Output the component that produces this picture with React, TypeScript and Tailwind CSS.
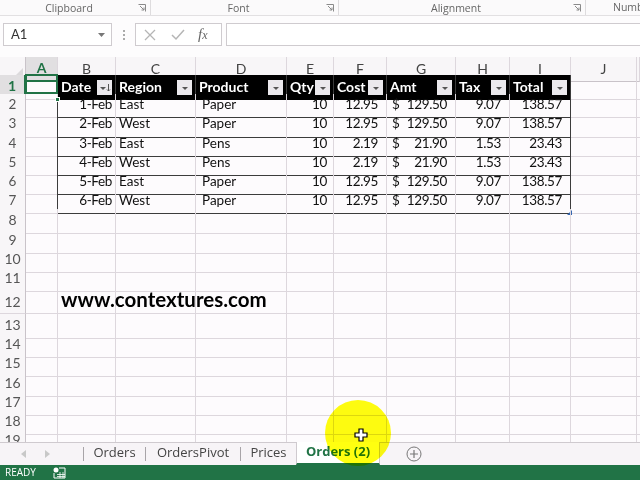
import React from 'react';

const COLS = 'grid grid-cols-[26px_32px_58px_80px_91px_47px_53px_69px_54px_61px_66px_1fr]';
const G = 'border-[#ddd7dd]';
const DARK = 'border-[#3c3c3c]';
const NUM = 'tracking-[-0.35px]';

type Row = [string, string, string, string, string, string, string, string];

const data: Row[] = [
  ['1-Feb', 'East', 'Paper', '10', '12.95', '129.50', '9.07', '138.57'],
  ['2-Feb', 'West', 'Paper', '10', '12.95', '129.50', '9.07', '138.57'],
  ['3-Feb', 'East', 'Pens', '10', '2.19', '21.90', '1.53', '23.43'],
  ['4-Feb', 'West', 'Pens', '10', '2.19', '21.90', '1.53', '23.43'],
  ['5-Feb', 'East', 'Paper', '10', '12.95', '129.50', '9.07', '138.57'],
  ['6-Feb', 'West', 'Paper', '10', '12.95', '129.50', '9.07', '138.57'],
];

function Launcher() {
  return (
    <svg width="8" height="8" viewBox="0 0 8 8" className="shrink-0">
      <path d="M0.5 0.5H7.5V7.5" fill="none" stroke="#8a8a8a" strokeWidth="1" />
      <path d="M2 2L6 6M6 3.5V6H3.5" fill="none" stroke="#8a8a8a" strokeWidth="1" />
    </svg>
  );
}

function FilterBtn({ sort }: { sort?: boolean }) {
  return (
    <div className="mr-[3px] flex h-[15px] w-[15px] items-center justify-center bg-[#ebe9ed]">
      <svg width="13" height="10" viewBox="0 0 13 10">
        <path d={sort ? 'M2 4H8L5 7Z' : 'M4 4H10L7 7Z'} fill="#555" />
        {sort && <path d="M10.5 1V8M9 6.5L10.5 8L12 6.5" fill="none" stroke="#555" strokeWidth="1" />}
      </svg>
    </div>
  );
}

function RowHead({ n, active, tall }: { n: number; active?: boolean; tall?: boolean }) {
  return (
    <div
      className={`flex items-center justify-center border-b border-r ${G} ${
        active
          ? 'border-r-2 border-r-[#217346] bg-[#e1dfe1] font-bold text-[#217346]'
          : 'border-r-[#c9c3c9] bg-[#f8f6f8] text-[#555]'
      } ${tall ? 'pt-[4px]' : 'pb-[3px]'}`}
    >
      {n}
    </div>
  );
}

export default function App() {
  const letters = ['A', 'B', 'C', 'D', 'E', 'F', 'G', 'H', 'I', 'J', ''];
  const heads = ['Date', 'Region', 'Product', 'Qty', 'Cost', 'Amt', 'Tax', 'Total'];
  const cell = 'flex items-center pb-[3px]';

  return (
    <div className="relative flex h-[480px] w-[640px] flex-col overflow-hidden bg-[#fdfbfd] font-[Lato,sans-serif] text-[14px] text-[#111]">
      {/* ribbon group labels */}
      <div className="flex h-[16px] border-b border-[#e2e0e2] bg-[#fbfafb] font-['Open_Sans',sans-serif] text-[10.5px] leading-[14px] text-[#666]">
        <div className="flex w-[151px] shrink-0 items-center border-r border-[#dedcde] pr-[4px]">
          <span className="flex-1 text-center">Clipboard</span>
          <Launcher />
        </div>
        <div className="flex w-[188px] shrink-0 items-center border-r border-[#dedcde] pr-[4px]">
          <span className="flex-1 text-center">Font</span>
          <Launcher />
        </div>
        <div className="flex w-[247px] shrink-0 items-center border-r border-[#dedcde] pr-[4px]">
          <span className="flex-1 text-center">Alignment</span>
          <Launcher />
        </div>
        <div className="shrink-0 whitespace-nowrap pl-[27px] leading-[14px]">Number</div>
      </div>

      {/* formula bar */}
      <div className="flex h-[41px] items-start bg-[#fdfcfd] pt-[7px]">
        <div className="ml-[3px] flex h-[23px] w-[109px] items-center justify-between border border-[#cfcbcf] bg-white pl-[7px] pr-[6px] text-[13px] text-[#333]">
          <span>A1</span>
          <svg width="7" height="4" viewBox="0 0 7 4">
            <path d="M0 0H7L3.5 4Z" fill="#777" />
          </svg>
        </div>
        <div className="ml-[10px] flex h-[23px] w-[4px] flex-col items-center justify-center gap-[2px]">
          <div className="h-[2px] w-[2px] bg-[#aaa]" />
          <div className="h-[2px] w-[2px] bg-[#aaa]" />
          <div className="h-[2px] w-[2px] bg-[#aaa]" />
        </div>
        <div className="ml-[9px] flex h-[23px] w-[87px] items-center border border-[#cfcbcf] bg-white">
          <svg width="12" height="12" viewBox="0 0 12 12" className="ml-[8px]">
            <path d="M1 1L11 11M11 1L1 11" stroke="#b5b5b5" strokeWidth="1.3" />
          </svg>
          <svg width="14" height="12" viewBox="0 0 14 12" className="ml-[15px]">
            <path d="M1 6L5 10L13 1" fill="none" stroke="#b5b5b5" strokeWidth="1.5" />
          </svg>
          <span className="ml-[13px] font-['Liberation_Serif',serif] text-[15px] italic text-[#666]">
            f<span className="text-[12px]">x</span>
          </span>
        </div>
        <div className="ml-[4px] h-[23px] flex-1 border border-r-0 border-[#cfcbcf] bg-white" />
      </div>

      {/* grid */}
      <div className="h-[385px] overflow-hidden">
        {/* column header */}
        <div className={`${COLS} h-[18px] text-[#444]`}>
          <div className="flex items-end justify-end border-b border-r border-[#c9c3c9] bg-[#f8f6f8] pb-[2px] pr-[2px]">
            <svg width="11" height="11" viewBox="0 0 11 11">
              <path d="M11 0V11H0Z" fill="#dcdadc" />
            </svg>
          </div>
          {letters.map((l, i) => (
            <div
              key={i}
              className={`flex items-center justify-center border-r pb-[2px] ${G} ${
                i === 0
                  ? 'border-b-2 border-b-[#217346] bg-[#e1dfe1] font-bold text-[#217346]'
                  : 'border-b border-b-[#c9c3c9] bg-[#f8f6f8]'
              }`}
            >
              {l}
            </div>
          ))}
        </div>

        {/* row 1: table header */}
        <div className={`${COLS} h-[19.2px]`}>
          <RowHead n={1} active />
          <div className={`relative border-b border-r ${G} ${DARK} border-b-[#ddd7dd]`}>
            <div className="absolute -left-[1px] -top-[1px] h-[20px] w-[33px] border-2 border-[#217346]" />
            <div className="absolute -bottom-[3px] -right-[3px] h-[5px] w-[5px] border border-white bg-[#217346]" />
          </div>
          {heads.map((h, i) => (
            <div key={h} className="flex items-center justify-between border-r border-[#3a3a3a] bg-black pl-[3px] font-bold text-white">
              <span className="pb-[3px]">{h}</span>
              <FilterBtn sort={i === 0} />
            </div>
          ))}
          <div className={`border-b border-r ${G}`} />
          <div className={`border-b ${G}`} />
        </div>

        {/* rows 2-7 */}
        {data.map((r, i) => (
          <div key={i} className={`${COLS} h-[19.2px] text-[13.5px]`}>
            <RowHead n={i + 2} />
            <div className={`border-b border-r-[1.5px] border-b-[#ddd7dd] ${DARK}`} />
            <div className={`${cell} ${NUM} justify-end border-b-[1.5px] border-r ${DARK} border-r-[#ddd7dd] pr-[3px]`}>{r[0]}</div>
            <div className={`${cell} border-b-[1.5px] border-r ${DARK} border-r-[#ddd7dd] pl-[3px]`}>{r[1]}</div>
            <div className={`${cell} border-b-[1.5px] border-r ${DARK} border-r-[#ddd7dd] pl-[6px]`}>{r[2]}</div>
            <div className={`${cell} ${NUM} justify-end border-b-[1.5px] border-r ${DARK} border-r-[#ddd7dd] pr-[6px]`}>{r[3]}</div>
            <div className={`${cell} ${NUM} justify-end border-b-[1.5px] border-r ${DARK} border-r-[#ddd7dd] pr-[8px]`}>{r[4]}</div>
            <div className={`${cell} ${NUM} justify-between border-b-[1.5px] border-r ${DARK} border-r-[#ddd7dd] pl-[5px] pr-[8px]`}>
              <span>$</span>
              <span>{r[5]}</span>
            </div>
            <div className={`${cell} ${NUM} justify-end border-b-[1.5px] border-r ${DARK} border-r-[#ddd7dd] pr-[8px]`}>{r[6]}</div>
            <div className={`relative ${cell} ${NUM} justify-end border-b-[1.5px] border-r-[1.5px] ${DARK} pr-[8px]`}>
              {r[7]}
              {i === 5 && (
                <svg width="5" height="5" viewBox="0 0 5 5" className="absolute -bottom-[2px] -right-[2px]">
                  <path d="M5 0V5H0Z" fill="#3566b0" />
                </svg>
              )}
            </div>
            <div className={`border-b border-r ${G}`} />
            <div className={`border-b ${G}`} />
          </div>
        ))}

        {/* rows 8-19 */}
        {Array.from({ length: 12 }, (_, k) => k + 8).map((n) => (
          <div key={n} className={`${COLS} ${n === 12 ? 'h-[28px]' : 'h-[19.2px]'}`}>
            <RowHead n={n} tall={n === 12} />
            {Array.from({ length: 10 }, (_, c) => (
              <div key={c} className={`relative border-b border-r ${G}`}>
                {n === 12 && c === 1 && (
                  <span className="absolute left-[3px] top-[1px] whitespace-nowrap text-[20.5px] font-bold leading-[24px] text-black">
                    www.contextures.com
                  </span>
                )}
              </div>
            ))}
            <div className={`border-b ${G}`} />
          </div>
        ))}
      </div>

      {/* sheet tabs */}
      <div className="flex h-[23px] items-stretch border-t border-[#cfcacf] bg-[#f7f4f7] font-['Open_Sans',sans-serif] text-[13px] text-[#444]">
        <div className="flex w-[83px] items-center pl-[20px]">
          <svg width="8" height="8" viewBox="0 0 8 8">
            <path d="M6 0V8L1 4Z" fill="#c8c8c8" />
          </svg>
          <svg width="8" height="8" viewBox="0 0 8 8" className="ml-[15px]">
            <path d="M2 0V8L7 4Z" fill="#c8c8c8" />
          </svg>
        </div>
        <div className="my-[4px] w-px bg-[#a8a4a8]" />
        <div className="flex w-[61px] items-center justify-center pb-[2px]">Orders</div>
        <div className="my-[4px] w-px bg-[#a8a4a8]" />
        <div className="flex w-[94px] items-center justify-center pb-[2px]">OrdersPivot</div>
        <div className="my-[4px] w-px bg-[#a8a4a8]" />
        <div className="flex w-[55px] items-center justify-center pb-[2px]">Prices</div>
        <div className="-mt-px flex w-[84px] items-center justify-center border-x border-b-2 border-x-[#cfcacf] border-b-[#217346] bg-white pb-[1px] font-bold text-[#217346]">
          Orders (2)
        </div>
        <div className="flex items-center pl-[26px]">
          <svg width="16" height="16" viewBox="0 0 16 16">
            <circle cx="8" cy="8" r="7" fill="none" stroke="#777" strokeWidth="1" />
            <path d="M8 4V12M4 8H12" stroke="#777" strokeWidth="1.2" />
          </svg>
        </div>
      </div>

      {/* status bar */}
      <div className="flex h-[15px] items-center bg-[#217346] pl-[5px] font-['Open_Sans',sans-serif] text-[10px] text-white">
        <span>READY</span>
        <svg width="13" height="12" viewBox="0 0 13 12" className="ml-[17px]">
          <circle cx="3" cy="3" r="2.5" fill="#fff" />
          <path d="M6 1H12V11H1V6" fill="none" stroke="#fff" strokeWidth="1" />
          <path d="M4 7.5H12M4 9.5H12M7 5V11M10 5V11" stroke="#fff" strokeWidth="0.8" />
        </svg>
      </div>

      {/* cursor highlight */}
      <div className="pointer-events-none absolute left-[325px] top-[400px] h-[66px] w-[66px] rounded-full bg-[#ffff10] mix-blend-multiply" />
      <svg width="14" height="14" viewBox="0 0 14 14" className="pointer-events-none absolute left-[354px] top-[428px]">
        <path d="M5 1H9V5H13V9H9V13H5V9H1V5H5Z" fill="#fff" stroke="#000" strokeWidth="1.2" />
      </svg>
    </div>
  );
}
